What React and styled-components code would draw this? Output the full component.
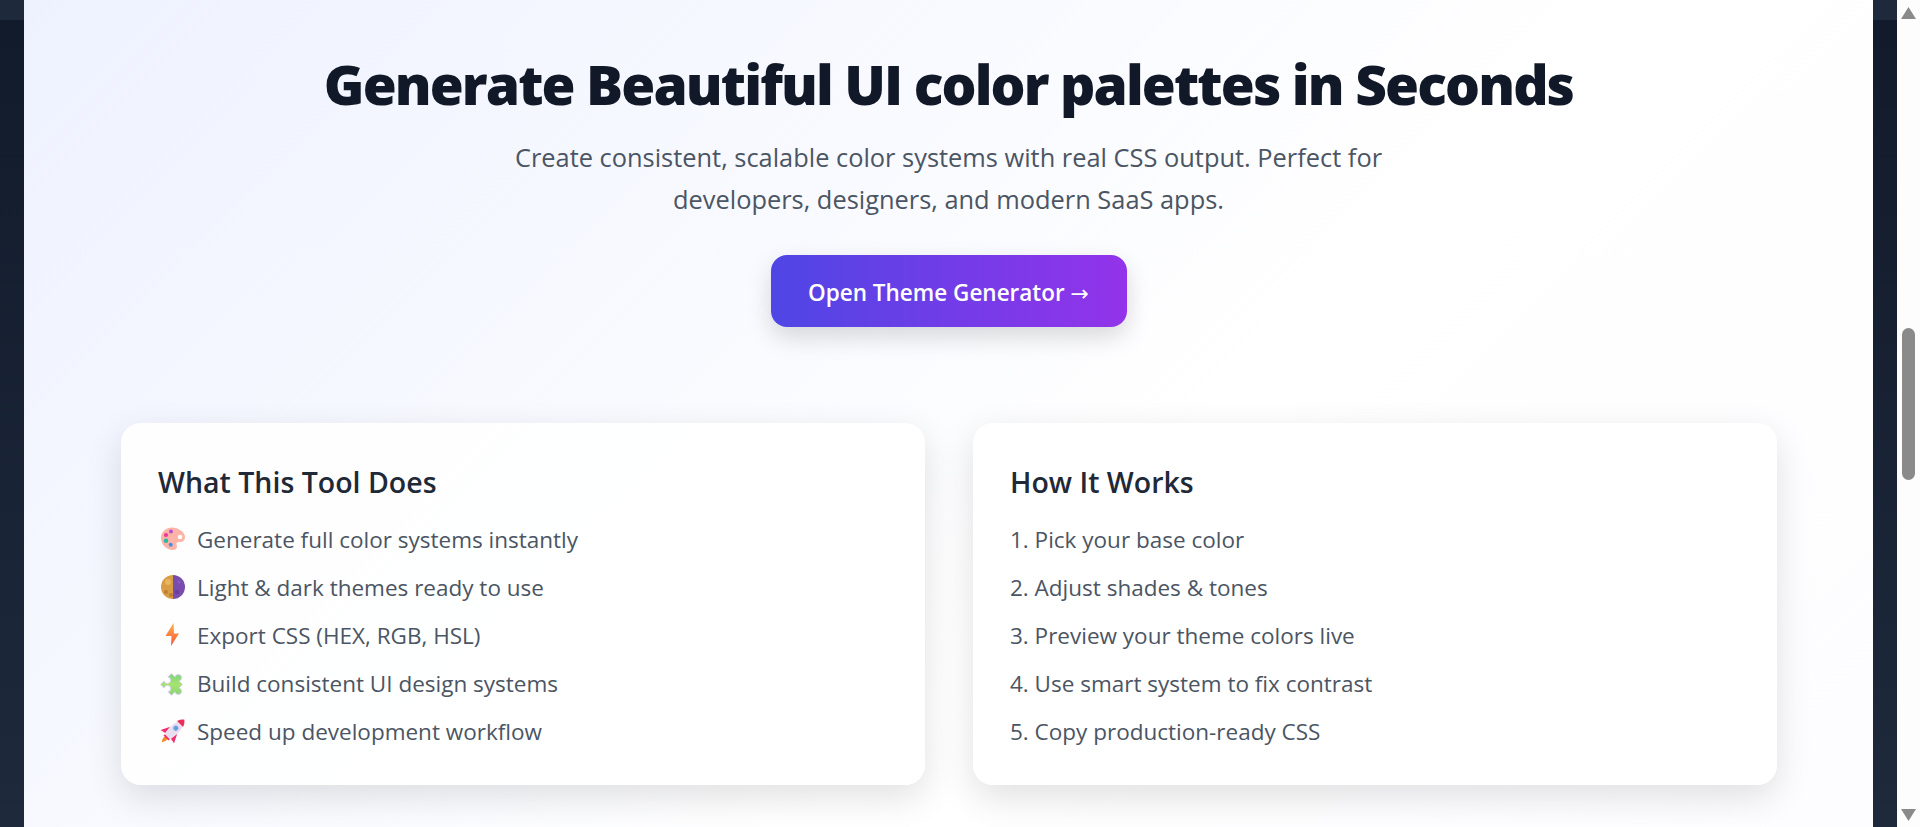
import React from "react";
import styled, { createGlobalStyle } from "styled-components";

const Global = createGlobalStyle`
  html, body { margin: 0; padding: 0; height: 827px; overflow: hidden; }
  body { font-family: "Open Sans", "Noto Sans", "Liberation Sans", sans-serif; }
`;
const Shell = styled.div`
  display: grid; grid-template-columns: 1fr 23px; height: 827px;
`;
const Backdrop = styled.div`
  padding: 0 24px; min-width: 0;
  background: linear-gradient(180deg, #1e293b 0, #1e293b 20px, #111b2c 20px, #1e293b 100%);
`;
const Main = styled.main`
  height: 827px; box-sizing: border-box; overflow: hidden;
  background: linear-gradient(135deg, #eef2ff 0%, #ffffff 60%, #fdfcff 100%);
`;
const Hero = styled.section`
  display: flex; flex-direction: column; align-items: center; padding-top: 52px;
`;
const Title = styled.h1`
  margin: 0; font-size: 55px; line-height: 64px; font-weight: 800; color: #111827; letter-spacing: -1.88px;
`;
const Lead = styled.p`
  margin: 20px 0 0; width: 900px; text-align: center; font-size: 25.4px; line-height: 42px; color: #4b5563;
`;
const Cta = styled.button`
  margin-top: 35px; width: 356px; height: 72px; padding: 2px 0 0; border: 0; border-radius: 16px;
  background: linear-gradient(90deg, #4f46e5, #9333ea); color: #fff;
  font: 600 22.5px "Open Sans", sans-serif; box-shadow: 0 10px 25px rgba(0,0,0,.15);
`;
const CtaArrow = styled.span`
  font-family: "DejaVu Sans", sans-serif; font-size: 22px; font-weight: 400;
`;
const Cards = styled.section`
  display: grid; grid-template-columns: 1fr 1fr; gap: 48px; padding: 96px 96px 0 97px;
`;
const Card = styled.article`
  height: 362px; box-sizing: border-box; padding: 40px 37px; border-radius: 20px;
  background: rgba(255,255,255,.85); box-shadow: 0 12px 36px rgba(0,0,0,.12);
`;
const CardTitle = styled.h2`
  margin: 0 0 14px; font-size: 28.5px; line-height: 38px; font-weight: 600; color: #1f2937;
`;
const Rows = styled.ul`
  margin: 0; padding: 0; list-style: none;
`;
const Row = styled.li`
  display: flex; align-items: center; gap: 12px; height: 48px; font-size: 22.5px; color: #4b5563;
`;
const Glyph = styled.svg`
  width: 24px; height: 24px; flex: none; margin-left: 3px; overflow: visible;
`;
const ScrollBar = styled.aside`
  display: flex; flex-direction: column; align-items: center; background: #fdfdfd; height: 827px;
`;
const Arrow = styled.svg`
  width: 15px; height: 12px; margin: 7px 0 6px; flex: none; fill: #8a8a8a;
`;
const Track = styled.div`
  flex: 1; padding-top: 303px;
`;
const Thumb = styled.div`
  width: 13px; height: 152px; border-radius: 7px; background: #8a8a8a;
`;

const Palette = () => (
  <Glyph viewBox="0 0 24 24">
    <path d="M11 .5C5 .5 0 5 0 11c0 6 5 12 12 12 4 0 4.500-3 3.500-5.500C15 15.500 17 15 19 15c3 0 5-1.500 5-5C24 5 17 .5 11 .5z" fill="#fdb4a6"/>
    <circle cx="19" cy="10" r="2.300" fill="#fff"/><circle cx="5" cy="8" r="2" fill="#f0329b"/>
    <circle cx="10" cy="4.500" r="2" fill="#b44cdc"/><circle cx="5" cy="13.700" r="2.300" fill="#2fb8a8"/><circle cx="9.700" cy="17.700" r="2" fill="#3f8fe8"/>
  </Glyph>
);
const Moon = () => (
  <Glyph viewBox="0 0 24 24">
    <path d="M12 0a12 12 0 0 0 0 24z" fill="#d99e45"/><path d="M12 0a12 12 0 0 1 0 24z" fill="#7a4cae"/>
    <circle cx="7" cy="7" r="3" fill="#e8b660"/><circle cx="5" cy="17" r="2" fill="#bd7c35"/><circle cx="10" cy="20" r="2" fill="#bd7c35"/>
    <circle cx="16" cy="17" r="2.200" fill="#6a3e9c"/><circle cx="18" cy="7" r="1.500" fill="#8b5cc0"/>
  </Glyph>
);
const Bolt = () => (
  <Glyph viewBox="0 0 24 24">
    <defs><linearGradient id="bolt" x1="0" y1="0" x2="0" y2="1"><stop offset="0" stopColor="#ffb24a"/><stop offset="1" stopColor="#f4553f"/></linearGradient></defs>
    <path d="M12.500 0 4.500 13h6L10 23 18 10.500h-5z" fill="url(#bolt)"/>
  </Glyph>
);
const Puzzle = () => (
  <Glyph viewBox="0 0 24 24">
    <defs><linearGradient id="pz" x1="0" y1="0" x2="1" y2="1"><stop offset="0" stopColor="#6fd18a"/><stop offset=".5" stopColor="#a5e36c"/><stop offset="1" stopColor="#7fd07e"/></linearGradient></defs>
    <g transform="rotate(45 12 12) translate(12 13) scale(1.1) translate(-12 -13)">
      <path d="M5 7h4.500a3 3 0 1 1 5 0H19v4.500a3 3 0 1 1 0 5V21h-4.500a3 3 0 1 0-5 0H5v-4.500a3 3 0 1 0 0-5V7z" fill="url(#pz)" stroke="#dcc8f7" strokeWidth=".7"/>
    </g>
  </Glyph>
);
const Rocket = () => (
  <Glyph viewBox="0 0 24 24">
    <g transform="rotate(45 12 12)">
      <path d="M12 21c-2 0-3 3 0 7 3-4 2-7 0-7z" fill="#f58a1f"/>
      <path d="M7 11 2.500 20l5.500-1zM17 11l4.500 9-5.500-1z" fill="#f2306f"/>
      <path d="M12-4c5 4 6 14 3.500 24h-7C6 10 7 0 12-4z" fill="#e9e0ef"/>
      <path d="M12-4c2 1.500 3.300 3.500 4.200 6H7.800C8.700-.5 10-2.500 12-4z" fill="#ee2d5a"/>
      <circle cx="12" cy="8" r="2.600" fill="#5f9fe8" stroke="#c9b9dc" strokeWidth=".6"/>
      <path d="M8.500 20h7v2h-7z" fill="#f2306f"/>
    </g>
  </Glyph>
);

const features = [
  [Palette, "Generate full color systems instantly"],
  [Moon, "Light & dark themes ready to use"],
  [Bolt, "Export CSS (HEX, RGB, HSL)"],
  [Puzzle, "Build consistent UI design systems"],
  [Rocket, "Speed up development workflow"],
];
const steps = ["1. Pick your base color", "2. Adjust shades & tones", "3. Preview your theme colors live", "4. Use smart system to fix contrast", "5. Copy production-ready CSS"];

export default function App() {
  return (
    <Shell>
      <Global />
      <Backdrop>
        <Main>
          <Hero>
            <Title>Generate Beautiful UI color palettes in Seconds</Title>
            <Lead>Create consistent, scalable color systems with real CSS output. Perfect for developers, designers, and modern SaaS apps.</Lead>
            <Cta>Open Theme Generator <CtaArrow>→</CtaArrow></Cta>
          </Hero>
          <Cards>
            <Card>
              <CardTitle>What This Tool Does</CardTitle>
              <Rows>{features.map(([Icon, t]) => <Row key={t}><Icon />{t}</Row>)}</Rows>
            </Card>
            <Card>
              <CardTitle>How It Works</CardTitle>
              <Rows>{steps.map(t => <Row key={t}>{t}</Row>)}</Rows>
            </Card>
          </Cards>
        </Main>
      </Backdrop>
      <ScrollBar>
        <Arrow viewBox="0 0 15 12"><path d="M7.500 0 15 12H0z"/></Arrow>
        <Track><Thumb /></Track>
        <Arrow viewBox="0 0 15 12"><path d="M7.500 12 15 0H0z"/></Arrow>
      </ScrollBar>
    </Shell>
  );
}
